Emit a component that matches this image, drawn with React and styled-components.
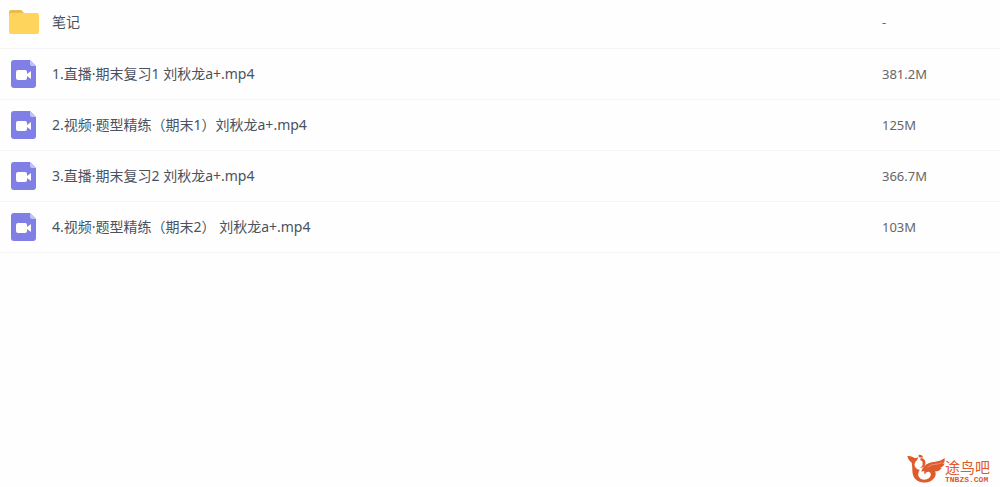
import React from "react";
import styled, { createGlobalStyle } from "styled-components";

const fileList = [
	{ type: "folder", name: "笔记", size: "-" },
	{ type: "video", name: "1.直播·期末复习1 刘秋龙a+.mp4", size: "381.2M" },
	{ type: "video", name: "2.视频·题型精练（期末1）刘秋龙a+.mp4", size: "125M" },
	{ type: "video", name: "3.直播·期末复习2 刘秋龙a+.mp4", size: "366.7M" },
	{ type: "video", name: "4.视频·题型精练（期末2） 刘秋龙a+.mp4", size: "103M" },
];

export default function App() {
	return (
		<Layout>
			<GlobalStyle />
			<FileTable>
				<tbody>
					{fileList.map((item) => (
						<FileRow key={item.name}>
							<IconCell>
								{item.type === "folder" ? (
									<FolderIcon />
								) : (
									<VideoIcon />
								)}
							</IconCell>
							<NameCell>{item.name}</NameCell>
							<SizeCell>{item.size}</SizeCell>
						</FileRow>
					))}
				</tbody>
			</FileTable>
			<Brand>
				<BirdLogo />
				<BrandText>
					<BrandName>途鸟吧</BrandName>
					<BrandSite>TNBZS.COM</BrandSite>
				</BrandText>
			</Brand>
		</Layout>
	);
}

function FolderIcon() {
	return (
		<IconSvg width="30" height="25" viewBox="0 0 30 25">
			<path
				d="M2 1h9.500c.8 0 1.200.3 1.700.9L15 4v5H0V3c0-1.200.8-2 2-2z"
				fill="#e9bd4d"
			/>
			<rect y="4" width="30" height="21" rx="2" fill="#ffd45c" />
		</IconSvg>
	);
}

function VideoIcon() {
	return (
		<IconSvg width="25" height="28" viewBox="0 0 25 28">
			<path
				d="M3 0h16l6 6v19a3 3 0 0 1-3 3H3a3 3 0 0 1-3-3V3a3 3 0 0 1 3-3z"
				fill="#807fe6"
			/>
			<path d="M19 0l6 6h-4a2 2 0 0 1-2-2z" fill="#c3c2f6" />
			<rect x="5" y="10" width="11" height="10" rx="2" fill="#fff" />
			<path d="M16 14l4-3v8l-4-3z" fill="#fff" />
		</IconSvg>
	);
}

function BirdLogo() {
	return (
		<IconSvg width="38" height="29" viewBox="0 0 114 87">
			<g fill="#df5b2b">
				{/* crest, neck and body */}
				<path d="M1 7c7-3 13 1 20 4 5 2 9 1 13-1-1 8-9 11-11 19-2 9 4 16 15 19-5 7-6 15-2 21 6 10 21 10 30 3 7-6 7-15 1-18-6-2-12 2-13 8-7-10 2-21 15-20 14 1 21 14 15 26-7 14-24 20-40 17-19-3-28-18-28-36 0-9-1-16-2-23-7-4-11-12-13-19z" />
				{/* head */}
				<path d="M35 3c6-2 12 1 13 7-5 2-9 2-13-1z" />
				<path d="M42 12c9 1 15 8 13 17-1 8-8 13-16 12 6-3 9-8 8-15-1-5-4-7-9-8 2-1 3-3 4-6z" />
				{/* wing */}
				<path d="M43 53c4-15 15-25 32-28 14-3 28-4 37-13 3 8 0 14-5 17 2 1 4 0 6-1-2 8-8 12-14 13l5 1c-6 9-15 12-26 10-12-2-24-3-35 1z" />
			</g>
			<path
				d="M62 41c6-8 13-9 22-10 9-1 16-2 22-6"
				fill="none"
				stroke="#fff"
				strokeWidth="1"
			/>
		</IconSvg>
	);
}

const GlobalStyle = createGlobalStyle`
	body {
		margin: 0;
		background-color: #fefefe;
		font-family: "Noto Sans", "Noto Sans CJK SC", sans-serif;
	}
`;

const Layout = styled.div`
	display: flex;
	flex-direction: column;
	justify-content: space-between;
	box-sizing: border-box;
	width: 100%;
	min-height: 100vh;
	padding-bottom: 4px;
`;

// file list
const FileTable = styled.table`
	width: 100%;
	table-layout: fixed;
	border-spacing: 0;
	font-size: 14px;
	line-height: 20px;
`;

const Cell = styled.td`
	box-sizing: border-box;
	height: 51px;
	padding: 0;
	border-bottom: 1px solid #f5f5f7;
	white-space: nowrap;
`;

const IconCell = styled(Cell)`
	width: 52px;
	padding-right: 5px;
	text-align: center;
`;

const NameCell = styled(Cell)`
	overflow: hidden;
	text-overflow: ellipsis;
	color: #4a5260;
`;

const SizeCell = styled(Cell)`
	width: 118px;
	font-size: 13px;
	color: #666;
`;

const FileRow = styled.tr`
	&:first-child ${Cell} {
		height: 49px;
		padding-bottom: 5px;
	}
`;

const IconSvg = styled.svg`
	display: inline-block;
	vertical-align: middle;
`;

// brand
const Brand = styled.div`
	display: flex;
	align-items: flex-end;
	align-self: flex-end;
	padding-right: 10px;
	color: #df5b2b;
`;

const BrandText = styled.div`
	display: flex;
	flex-direction: column;
`;

const BrandName = styled.span`
	font-family: "Noto Sans CJK SC", sans-serif;
	font-size: 15px;
	line-height: 20px;
`;

const BrandSite = styled.span`
	font-family: "Liberation Mono", monospace;
	font-size: 8px;
	line-height: 6px;
	font-weight: 700;
`;
